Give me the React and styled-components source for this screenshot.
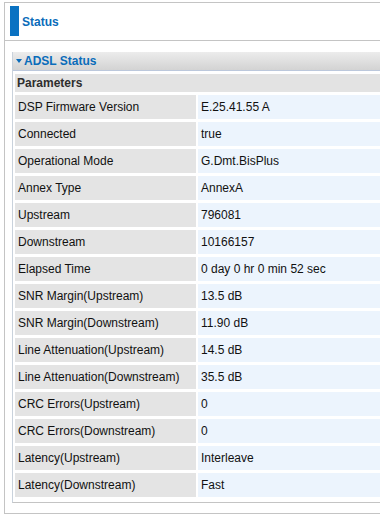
import styled, { createGlobalStyle } from "styled-components";

const GlobalStyle = createGlobalStyle`
  html, body {
    margin: 0;
    padding: 0;
    background: #ffffff;
    overflow: hidden;
  }
  body {
    font-family: "Liberation Sans", Arial, sans-serif;
    font-size: 12px;
    color: #000;
  }
`;

const Page = styled.div`
  padding: 2px 0 0 4px;
`;

const Frame = styled.div`
  width: 376px;
  height: 512px;
  border: 1px solid #c4c4c4;
  border-right: none;
  box-sizing: border-box;
  overflow: hidden;
`;

const TitleBar = styled.div`
  height: 37px;
  display: flex;
  align-items: flex-start;
  border-bottom: 1px solid #c4c4c4;
`;

const TitleMark = styled.div`
  width: 9px;
  height: 30px;
  margin: 3px 3px 0 5px;
  background: #0a72c2;
`;

const TitleText = styled.h1`
  margin: 0;
  font-size: 12px;
  font-weight: bold;
  color: #0a6cba;
  line-height: 14px;
  padding-top: 12px;
`;

const Content = styled.div`
  padding: 11px 0 0 7px;
`;

const Section = styled.div`
  border-left: 1px solid #c9d2dc;
  border-bottom: 1px solid #c4c4c4;
  padding-bottom: 5px;
`;

const SectionHead = styled.div`
  height: 18px;
  display: flex;
  align-items: center;
  padding-left: 3px;
  background: linear-gradient(#ececec, #d3d3d3);
  border-bottom: 1px solid #bcc8dc;
  font-weight: bold;
  color: #0a6cba;
`;

const Caret = styled.span`
  width: 0;
  height: 0;
  border-left: 3px solid transparent;
  border-right: 3px solid transparent;
  border-top: 4px solid #0a6cba;
  margin-right: 2px;
`;

const Table = styled.div`
  margin: 3px 0 0 2px;
  display: grid;
  grid-template-columns: 181px 1fr;
  column-gap: 2px;
  row-gap: 3px;
`;

const GroupRow = styled.div`
  grid-column: 1 / -1;
  height: 18px;
  display: flex;
  align-items: center;
  padding-left: 2px;
  background: #e3e3e3;
  font-weight: bold;
  color: #2e2e2e;
`;

const Cell = styled.div`
  height: 24px;
  display: flex;
  align-items: center;
  padding: 0 0 1px 3px;
  box-sizing: border-box;
  background: ${(props) => (props.value ? "#ecf4fd" : "#e4e4e4")};
  color: #111;
`;

const rows = [
  ["DSP Firmware Version", "E.25.41.55 A"],
  ["Connected", "true"],
  ["Operational Mode", "G.Dmt.BisPlus"],
  ["Annex Type", "AnnexA"],
  ["Upstream", "796081"],
  ["Downstream", "10166157"],
  ["Elapsed Time", "0 day 0 hr 0 min 52 sec"],
  ["SNR Margin(Upstream)", "13.5 dB"],
  ["SNR Margin(Downstream)", "11.90 dB"],
  ["Line Attenuation(Upstream)", "14.5 dB"],
  ["Line Attenuation(Downstream)", "35.5 dB"],
  ["CRC Errors(Upstream)", "0"],
  ["CRC Errors(Downstream)", "0"],
  ["Latency(Upstream)", "Interleave"],
  ["Latency(Downstream)", "Fast"],
];

const App = () => {
  return (
    <Page>
      <GlobalStyle />
      <Frame>
        <TitleBar>
          <TitleMark />
          <TitleText>Status</TitleText>
        </TitleBar>
        <Content>
          <Section>
            <SectionHead>
              <Caret />
              ADSL Status
            </SectionHead>
            <Table>
              <GroupRow>Parameters</GroupRow>
              {rows.map(([label, val]) => [
                <Cell key={label}>{label}</Cell>,
                <Cell key={label + "-v"} value>
                  {val}
                </Cell>,
              ])}
            </Table>
          </Section>
        </Content>
      </Frame>
    </Page>
  );
};

export default App;
